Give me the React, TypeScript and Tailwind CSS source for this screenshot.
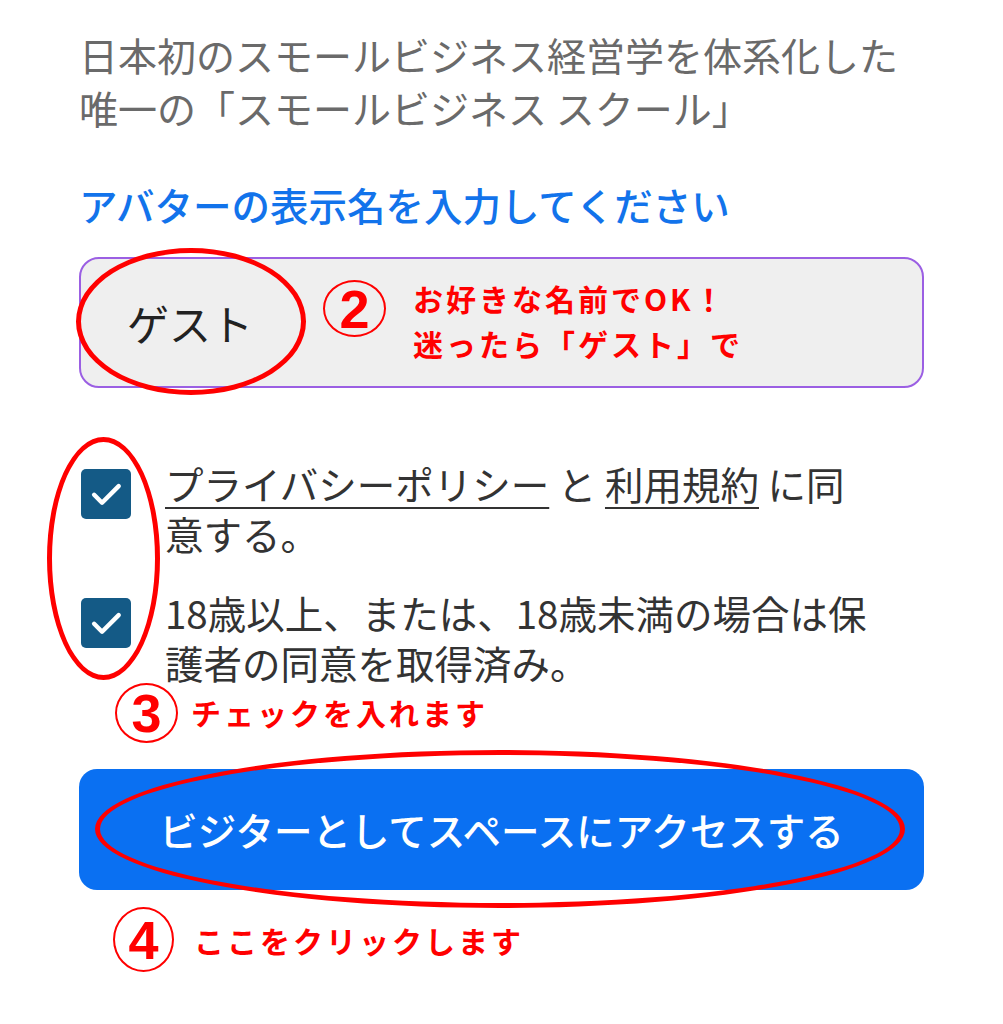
import { Fragment } from 'react';

const circled = [
  { n: '3', pos: 'left-[115px] top-[683px] w-[63px] h-[60px]' },
  { n: '4', pos: 'left-[113px] top-[907px] w-[61px] h-[65px]' },
];

function Check() {
  return (
    <div className="mt-[11px] flex h-[50px] w-[50px] shrink-0 items-center justify-center rounded-[5px] bg-[#145a86]">
      <svg viewBox="0 0 24 24" className="h-[38px] w-[38px]" fill="none" stroke="white" strokeWidth="2.8" strokeLinecap="round" strokeLinejoin="round">
        <path d="M4.5 12.5l5 5L20 7" />
      </svg>
    </div>
  );
}

export default function App() {
  return (
    <div className="relative h-[1024px] w-[1003px] overflow-hidden bg-white font-['Noto_Sans_CJK_JP',sans-serif]">
      <div className="px-[79px] pt-[28px]">
        <p className="text-[39px] leading-[53px] text-[#6a6a6a]">
          日本初のスモールビジネス経営学を体系化した
          <br />
          唯一の「スモールビジネス スクール」
        </p>

        <h2 className="mt-[44px] text-[38.5px] font-medium leading-[53px] text-[#1273eb]">
          アバターの表示名を入力してください
        </h2>

        <div className="mt-[26px] flex h-[131px] items-center rounded-[20px] border-2 border-[#9b5fe3] bg-[#efefef] pl-[46px]">
          <span className="text-[42px] leading-none text-[#222]">ゲスト</span>
        </div>

        <div className="mt-[70px] flex flex-col gap-[29px]">
          <div className="flex gap-[34px] pl-[2px]">
            <Check />
            <p className="w-[708px] text-[38.5px] leading-[50px] text-[#333]">
              <span className="underline decoration-2 underline-offset-[7px]">プライバシーポリシー</span> と{' '}
              <span className="underline decoration-2 underline-offset-[7px]">利用規約</span> に同意する。
            </p>
          </div>
          <div className="flex gap-[34px] pl-[2px]">
            <Check />
            <p className="w-[708px] text-[38.5px] leading-[50px] text-[#333]">
              18歳以上、または、18歳未満の場合は保護者の同意を取得済み。
            </p>
          </div>
        </div>

        <button className="mt-[82px] flex h-[121px] w-full items-center justify-center rounded-[18px] bg-[#0a70f2] text-[38.5px] font-medium text-white">
          ビジターとしてスペースにアクセスする
        </button>
      </div>

      {/* red annotations */}
      <div className="absolute left-[76px] top-[248px] h-[147px] w-[230px] rounded-[50%] border-[5px] border-[#f00]" />
      <div className="absolute left-[47px] top-[437px] h-[243px] w-[113px] rounded-[50%] border-[5px] border-[#f00]" />
      <div className="absolute left-[95px] top-[750px] h-[158px] w-[810px] rounded-[50%] border-[5px] border-[#f00]" />

      <div className="absolute left-[323px] top-[280px] flex h-[57px] w-[63px] items-center justify-center rounded-[50%] border-2 border-[#f00] font-['Liberation_Sans',sans-serif] text-[54px] font-bold leading-none text-[#f00]">
        2
      </div>
      <div className="absolute left-[413px] top-[276px] text-[30px] font-bold leading-[45px] tracking-[3px] text-[#f00]">
        お好きな名前でOK！
        <br />
        迷ったら「ゲスト」で
      </div>

      {circled.map((c) => (
        <Fragment key={c.n}>
          <div className={`absolute ${c.pos} flex items-center justify-center rounded-[50%] border-2 border-[#f00] font-['Liberation_Sans',sans-serif] text-[54px] font-bold leading-none text-[#f00]`}>
            {c.n}
          </div>
        </Fragment>
      ))}
      <div className="absolute left-[191px] top-[690px] text-[30px] font-bold leading-[45px] tracking-[3px] text-[#f00]">
        チェックを入れます
      </div>
      <div className="absolute left-[194px] top-[918px] text-[30px] font-bold leading-[45px] tracking-[3px] text-[#f00]">
        ここをクリックします
      </div>
    </div>
  );
}
